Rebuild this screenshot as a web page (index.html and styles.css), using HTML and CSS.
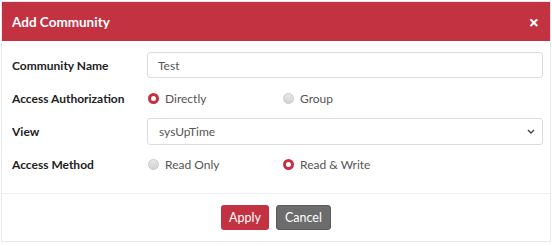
FILE: index.html
```html
<!DOCTYPE html>
<html>
<head>
    <title>Add Community</title>
    <link rel="stylesheet" href="styles.css">
</head>
<body>
    <div class="modal">
        <div class="modal-header">
            <span class="modal-title">Add Community</span>
            <button class="close-button">&times;</button>
        </div>
        <form class="modal-body">
            <div class="form-row">
                <label class="form-label">Community Name</label>
                <input type="text" class="form-input" value="Test">
            </div>
            <div class="form-row">
                <label class="form-label">Access Authorization</label>
                <div class="radio-group">
                    <label class="radio-option"><span class="radio checked"></span>Directly</label>
                    <label class="radio-option"><span class="radio"></span>Group</label>
                </div>
            </div>
            <div class="form-row">
                <label class="form-label">View</label>
                <div class="form-select">
                    <span>sysUpTime</span>
                    <svg class="chevron" width="8" height="5" viewBox="0 0 8 5"><path d="M1 1 L4 4 L7 1" fill="none" stroke="#444" stroke-width="1.4"/></svg>
                </div>
            </div>
            <div class="form-row">
                <label class="form-label">Access Method</label>
                <div class="radio-group">
                    <label class="radio-option"><span class="radio"></span>Read Only</label>
                    <label class="radio-option"><span class="radio checked"></span>Read &amp; Write</label>
                </div>
            </div>
        </form>
        <div class="modal-footer">
            <button class="btn btn-apply">Apply</button>
            <button class="btn btn-cancel">Cancel</button>
        </div>
    </div>
</body>
</html>
```

FILE: styles.css
```css
body {
    margin: 0;
    padding: 1px 1px 0 1px;
    background-color: #fff;
    font-family: Lato, "Open Sans", sans-serif;
    font-size: 12px;
    color: #222;
}

.modal {
    width: 548px;
    border: 1px solid #e8e8e8;
    background-color: #fff;
}

.modal-header {
    height: 39px;
    background-color: #c33241;
    color: #fff;
    display: flex;
    align-items: center;
    justify-content: space-between;
    padding: 0 11px 0 10px;
}

.modal-title {
    font-size: 13.5px;
    font-weight: bold;
}

.close-button {
    background: none;
    border: none;
    color: #fff;
    font-size: 18px;
    font-weight: bold;
    padding: 0;
    line-height: 1;
    cursor: pointer;
    font-family: "Open Sans", sans-serif;
}

.modal-body {
    padding: 11px 7px 16px 10px;
    margin: 0;
}

.form-row {
    display: flex;
    align-items: center;
    height: 26px;
    margin-bottom: 7px;
}

.form-row:last-child {
    margin-bottom: 0;
}

.form-label {
    width: 135px;
    font-weight: bold;
    color: #222;
}

.form-input,
.form-select {
    flex: 1;
    height: 26px;
    box-sizing: border-box;
    border: 1px solid #dcdcdc;
    border-radius: 3px;
    padding: 0 10px;
    font-family: inherit;
    font-size: 12px;
    color: #555;
    outline: none;
}

.form-select {
    height: 27px;
    display: flex;
    align-items: center;
    justify-content: space-between;
    padding: 0 7px 0 11px;
}

.radio-group {
    display: flex;
}

.radio-option {
    width: 135px;
    display: flex;
    align-items: center;
    color: #555;
}

.radio {
    width: 11px;
    height: 11px;
    box-sizing: border-box;
    border-radius: 50%;
    border: 1px solid #c8c8c8;
    background: linear-gradient(#e8e8e8, #d2d2d2);
    margin: 0 6px 0 1px;
}

.radio.checked {
    border: 3.5px solid #c33241;
    background: #fff;
}

.modal-footer {
    border-top: 1px solid #efefef;
    display: flex;
    justify-content: center;
    gap: 7px;
    padding: 11px 0 11px 0;
}

.btn {
    height: 25px;
    border: none;
    border-radius: 3px;
    color: #fff;
    font-family: inherit;
    font-size: 12.5px;
    padding: 0 8px;
    cursor: pointer;
}

.btn-apply {
    background-color: #c33241;
}

.btn-cancel {
    background-color: #6c6c6c;
    border: 1px solid #5a5a5a;
}
```
